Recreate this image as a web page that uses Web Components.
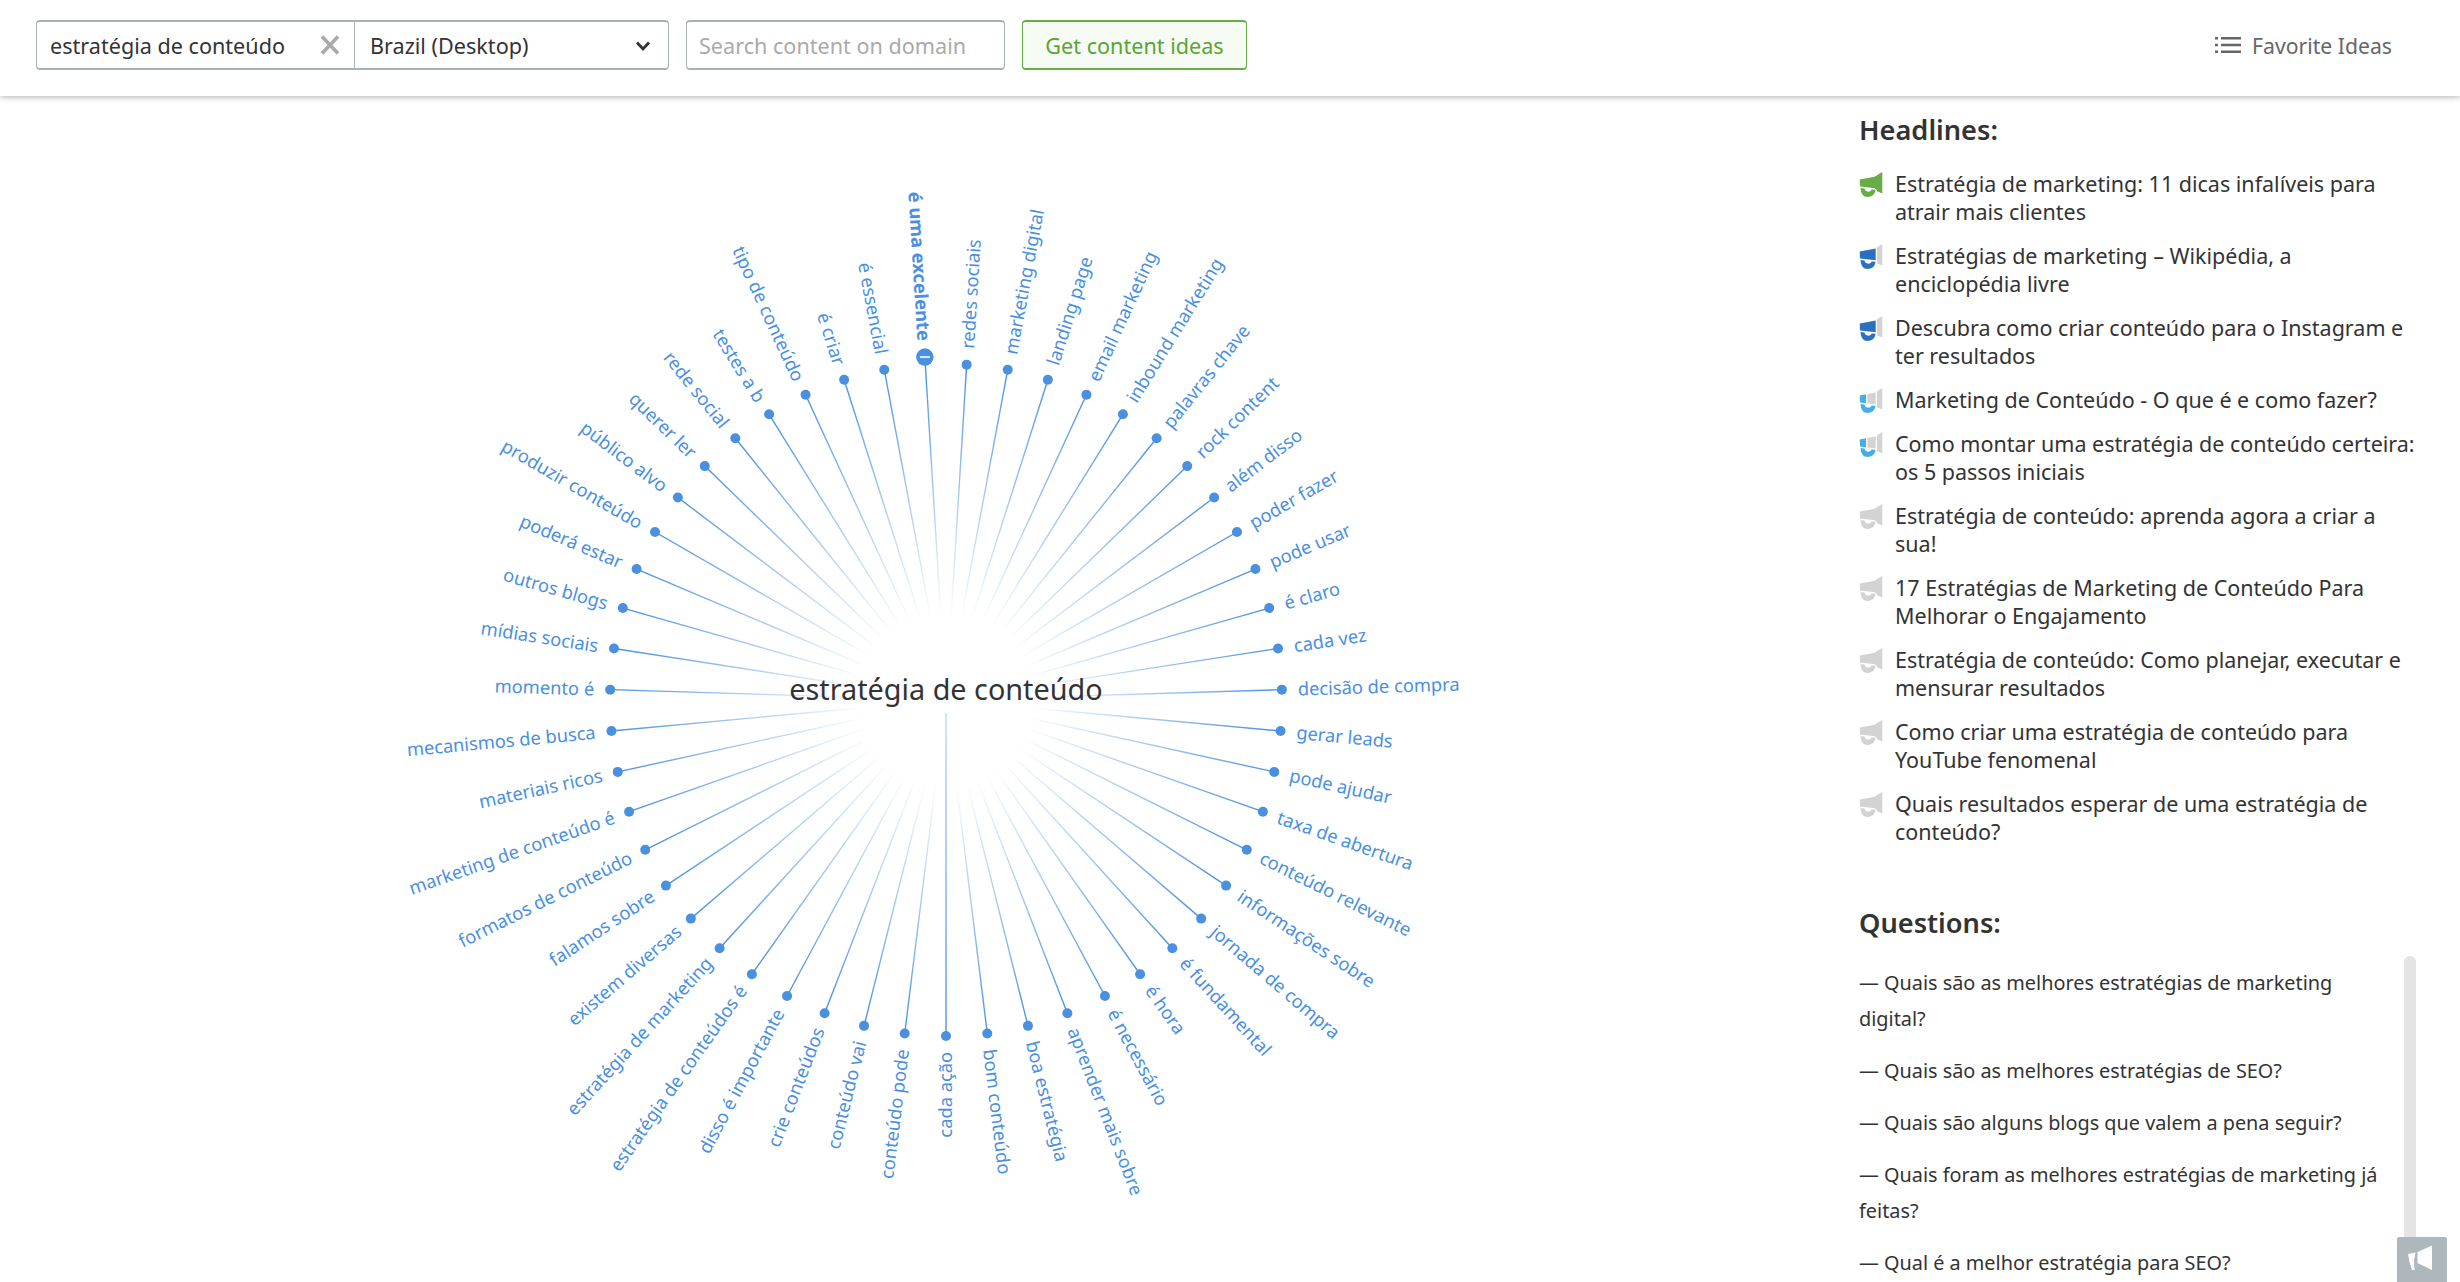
<!DOCTYPE html>
<html lang="pt">
<head>
<meta charset="utf-8">
<title>Topic ideas</title>
<style>
  html, body { margin: 0; height: 100%; overflow: hidden; background: #fff; }
  body { font-family: "Noto Sans", "Open Sans", sans-serif; color: #333; }
  .page { display: flex; height: calc(100vh - 96px); }
</style>
</head>
<body>
<top-bar></top-bar>
<div class="page">
  <idea-wheel keyword="estratégia de conteúdo"></idea-wheel>
  <ideas-panel>
    <panel-section heading="Headlines:">
      <headline-item level="high">Estratégia de marketing: 11 dicas infalíveis para<br>atrair mais clientes</headline-item>
      <headline-item level="medium">Estratégias de marketing – Wikipédia, a<br>enciclopédia livre</headline-item>
      <headline-item level="medium">Descubra como criar conteúdo para o Instagram e<br>ter resultados</headline-item>
      <headline-item level="low">Marketing de Conteúdo - O que é e como fazer?</headline-item>
      <headline-item level="low">Como montar uma estratégia de conteúdo certeira:<br>os 5 passos iniciais</headline-item>
      <headline-item>Estratégia de conteúdo: aprenda agora a criar a<br>sua!</headline-item>
      <headline-item>17 Estratégias de Marketing de Conteúdo Para<br>Melhorar o Engajamento</headline-item>
      <headline-item>Estratégia de conteúdo: Como planejar, executar e<br>mensurar resultados</headline-item>
      <headline-item>Como criar uma estratégia de conteúdo para<br>YouTube fenomenal</headline-item>
      <headline-item>Quais resultados esperar de uma estratégia de<br>conteúdo?</headline-item>
    </panel-section>
    <panel-section heading="Questions:" class="questions">
      <question-item>— Quais são as melhores estratégias de marketing<br>digital?</question-item>
      <question-item>— Quais são as melhores estratégias de SEO?</question-item>
      <question-item>— Quais são alguns blogs que valem a pena seguir?</question-item>
      <question-item>— Quais foram as melhores estratégias de marketing já<br>feitas?</question-item>
      <question-item>— Qual é a melhor estratégia para SEO?</question-item>
    </panel-section>
  </ideas-panel>
</div>
<feedback-tab></feedback-tab>

<script>
const MEGAPHONE = {
  bell: 'M18 3.2 23.3 0V21.6L18 19.2Z',
  join: 'M16 4.5 19 2.8V19.6L16 16.2Z',
  body: 'M.7 7.4 16.7 4.4V16.2L1 14.6Z',
  bodyLeft: 'M.7 7.4 7 6.2V15.2L1 14.6Z',
  bodyRight: 'M8.4 6 16.7 4.4V16.2L8.4 15.4Z',
  handle: 'M1.6 16 5.6 16.6C5.6 20.4 11.4 20.6 12.6 17.4L16.6 17.8C16 22.6 12.4 25 8.6 25 4.4 25 1.6 21.6 1.6 16Z'
};

class TopBar extends HTMLElement {
  constructor() {
    super();
    this.attachShadow({ mode: 'open' });
  }

  connectedCallback() {
    this.shadowRoot.innerHTML = `
      <style>
        :host {
          display: flex;
          position: relative;
          z-index: 2;
          box-sizing: border-box;
          height: 96px;
          padding: 20px 68px 0 36px;
          background: #fff;
          box-shadow: 0 1px 6px rgba(0, 0, 0, 0.32);
          font-size: 21.6px;
        }
        .box {
          box-sizing: border-box;
          height: 50px;
          border: solid #a9b1b3;
          border-width: 2px 1px;
          border-radius: 4px;
          display: flex;
          align-items: center;
        }
        .combo { width: 633px; }
        .keyword {
          width: 318px;
          box-sizing: border-box;
          height: 100%;
          padding: 0 13px 0 13px;
          border-right: 1px solid #a9b1b3;
          display: flex;
          align-items: center;
          justify-content: space-between;
        }
        .region {
          flex: 1;
          padding: 0 16px 0 15px;
          display: flex;
          align-items: center;
          justify-content: space-between;
        }
        .domain {
          width: 319px;
          margin-left: 17px;
          padding-left: 12px;
          color: #aaa;
        }
        .go {
          width: 225px;
          margin-left: 17px;
          justify-content: center;
          border-color: #67ad45;
          background: #f6fbf3;
          color: #5aa435;
        }
        .favorites {
          margin-left: auto;
          display: flex;
          align-items: center;
          gap: 11px;
          height: 50px;
          color: #666;
          font-size: 21.2px;
        }
      </style>
      <div class="box combo">
        <div class="keyword">
          <span>estratégia de conteúdo</span>
          <svg width="22" height="22" viewBox="0 0 22 22"><path d="M3 2.5 19 19.5M19 2.5 3 19.5" stroke="#aaa" stroke-width="3.6" fill="none"/></svg>
        </div>
        <div class="region">
          <span>Brazil (Desktop)</span>
          <svg width="18" height="18" viewBox="0 0 18 18"><path d="M3 6.5 9 13 15 6.5" stroke="#333" stroke-width="2.8" fill="none"/></svg>
        </div>
      </div>
      <div class="box domain">Search content on domain</div>
      <div class="box go">Get content ideas</div>
      <div class="favorites">
        <svg width="26" height="18" viewBox="0 0 26 18" fill="#666"><path d="M0 1h3v2.4H0zM6 1h20v2.4H6zM0 7.8h3v2.4H0zM6 7.8h20v2.4H6zM0 14.6h3V17H0zM6 14.6h20V17H6z"/></svg>
        <span>Favorite Ideas</span>
      </div>
    `;
  }
}

class IdeaWheel extends HTMLElement {
  constructor() {
    super();
    this.attachShadow({ mode: 'open' });
    this.labels = [
      'é uma excelente', 'redes sociais', 'marketing digital', 'landing page', 'email marketing',
      'inbound marketing', 'palavras chave', 'rock content', 'além disso', 'poder fazer', 'pode usar',
      'é claro', 'cada vez', 'decisão de compra', 'gerar leads', 'pode ajudar', 'taxa de abertura',
      'conteúdo relevante', 'informações sobre', 'jornada de compra', 'é fundamental', 'é hora',
      'é necessário', 'aprender mais sobre', 'boa estratégia', 'bom conteúdo', 'cada ação', 'conteúdo pode',
      'conteúdo vai', 'crie conteúdos', 'disso é importante', 'estratégia de conteúdos é',
      'estratégia de marketing', 'existem diversas', 'falamos sobre', 'formatos de conteúdo',
      'marketing de conteúdo é', 'materiais ricos', 'mecanismos de busca', 'momento é', 'mídias sociais',
      'outros blogs', 'poderá estar', 'produzir conteúdo', 'público alvo', 'querer ler', 'rede social',
      'testes a b', 'tipo de conteúdo', 'é criar', 'é essencial'
    ];
  }

  connectedCallback() {
    this.render();
  }

  render = () => {
    const cx = 946, cy = 604, r = 336;
    const step = 360 / this.labels.length;
    const parts = this.labels.map((label, i) => {
      const deg = -step / 2 + i * step;
      const rad = deg * Math.PI / 180;
      const selected = i === 0;
      const dotR = selected ? r + 7.6 : r;
      const x = cx + Math.sin(rad) * dotR;
      const y = cy - Math.cos(rad) * dotR;
      const gap = selected ? 24 : 16;
      const tx = cx + Math.sin(rad) * (r + gap);
      const ty = cy - Math.cos(rad) * (r + gap);
      const left = deg < 0 || deg >= 179;
      const rot = left ? deg + 90 : deg - 90;
      const stroke = i === 26 ? 'url(#straight)' : 'url(#fade)';
      const innerR = i === 26 ? 13 : 60;
      const ix = cx + Math.sin(rad) * innerR;
      const iy = cy - Math.cos(rad) * innerR;
      return `
        <line x1="${ix.toFixed(2)}" y1="${iy.toFixed(2)}" x2="${x.toFixed(2)}" y2="${y.toFixed(2)}" stroke="${stroke}" stroke-width="1.4"/>
        <circle cx="${x.toFixed(2)}" cy="${y.toFixed(2)}" r="${selected ? 8.7 : 5}" fill="#4a90df"/>
        ${selected ? `<rect x="${(x - 5).toFixed(2)}" y="${(y - 1).toFixed(2)}" width="10" height="2" fill="#dbe9f9"/>` : ''}
        <text class="${selected ? 'label on' : 'label'}" text-anchor="${left ? 'end' : 'start'}" dy="0.35em"
          transform="translate(${tx.toFixed(2)} ${ty.toFixed(2)}) rotate(${rot.toFixed(2)})">${label}</text>`;
    }).join('');

    this.shadowRoot.innerHTML = `
      <style>
        :host { display: block; width: 1859px; flex: none; overflow: hidden; }
        svg { display: block; }
        .label { font-size: 18.3px; fill: #4a90df; }
        .on { font-weight: 700; }
        .center { font-size: 28.8px; fill: #333; }
      </style>
      <svg width="1859" height="1186" viewBox="0 0 1859 1186">
        <defs>
          <radialGradient id="fade" gradientUnits="userSpaceOnUse" cx="${cx}" cy="${cy}" r="${r}">
            <stop offset="0.25" stop-color="#4a90df" stop-opacity="0"/>
            <stop offset="1" stop-color="#4a90df" stop-opacity="1"/>
          </radialGradient>
          <linearGradient id="straight" gradientUnits="userSpaceOnUse" x1="${cx}" y1="${cy + 13}" x2="${cx}" y2="${cy + r}">
            <stop offset="0" stop-color="#4a90df" stop-opacity="0.35"/>
            <stop offset="1" stop-color="#4a90df" stop-opacity="1"/>
          </linearGradient>
        </defs>
        ${parts}
        <text class="center" x="${cx}" y="604" text-anchor="middle">${this.getAttribute('keyword')}</text>
      </svg>
    `;
  }
}

class IdeasPanel extends HTMLElement {
  constructor() {
    super();
    this.attachShadow({ mode: 'open' });
  }

  connectedCallback() {
    this.shadowRoot.innerHTML = `
      <style>
        :host {
          display: flex;
          flex-direction: column;
          flex: 1;
          position: relative;
          box-sizing: border-box;
          padding: 16px 0 0 0;
          font-size: 21.5px;
        }
        .thumb {
          position: absolute;
          left: 545px;
          top: 860px;
          width: 12px;
          height: 340px;
          border-radius: 6px 6px 0 0;
          background: #e4e4e4;
        }
      </style>
      <slot></slot>
      <div class="thumb"></div>
    `;
  }
}

class PanelSection extends HTMLElement {
  constructor() {
    super();
    this.attachShadow({ mode: 'open' });
  }

  connectedCallback() {
    this.shadowRoot.innerHTML = `
      <style>
        :host { display: block; }
        :host(.questions) { margin-top: 59px; }
        :host(.questions) h2 { margin-bottom: 24px; }
        h2 {
          margin: 0 0 22px;
          font-size: 27.2px;
          line-height: 36px;
          font-weight: 600;
          color: #333;
        }
        .items { display: flex; flex-direction: column; gap: 16px; }
      </style>
      <h2>${this.getAttribute('heading')}</h2>
      <div class="items"><slot></slot></div>
    `;
  }
}

class HeadlineItem extends HTMLElement {
  constructor() {
    super();
    this.attachShadow({ mode: 'open' });
  }

  connectedCallback() {
    const level = this.getAttribute('level');
    const grey = '#d3d3d3';
    const tint = { high: '#67ad45', medium: '#2a70bf', low: '#45aee8' }[level] || grey;
    const body = level === 'low'
      ? `<path d="${MEGAPHONE.bodyLeft}" fill="${tint}"/><path d="${MEGAPHONE.bodyRight}" fill="${grey}"/>`
      : `<path d="${MEGAPHONE.body}" fill="${tint}"/>`;
    const bellColor = level === 'high' ? tint : grey;
    const join = level === 'high' || !level ? `<path d="${MEGAPHONE.join}" fill="${tint}"/>` : '';
    this.shadowRoot.innerHTML = `
      <style>
        :host { display: flex; gap: 12px; line-height: 28px; white-space: nowrap; color: #333; }
        svg { flex: none; margin-top: 2px; }
      </style>
      <svg width="24" height="25" viewBox="0 0 24 25">
        <path d="${MEGAPHONE.bell}" fill="${bellColor}"/>
        ${join}
        ${body}
        <path d="${MEGAPHONE.handle}" fill="${tint}"/>
      </svg>
      <div><slot></slot></div>
    `;
  }
}

class QuestionItem extends HTMLElement {
  constructor() {
    super();
    this.attachShadow({ mode: 'open' });
  }

  connectedCallback() {
    this.shadowRoot.innerHTML = `
      <style>
        :host { display: block; line-height: 36px; white-space: nowrap; color: #333; font-size: 19.85px; }
      </style>
      <slot></slot>
    `;
  }
}

class FeedbackTab extends HTMLElement {
  constructor() {
    super();
    this.attachShadow({ mode: 'open' });
  }

  connectedCallback() {
    this.shadowRoot.innerHTML = `
      <style>
        :host {
          position: fixed;
          right: 13px;
          bottom: 0;
          z-index: 3;
          display: block;
          width: 50px;
          height: 45px;
          border-radius: 2px 2px 0 0;
          background: #aeb7bc;
        }
        svg { display: block; }
      </style>
      <svg width="50" height="45" viewBox="0 0 50 45" fill="#fff">
        <path d="M20.5 15 35 8.5V33L20.5 26ZM11 17 18.5 15.5 17 24 17.6 33H15L12.5 25Z"/>
      </svg>
    `;
  }
}

customElements.define('top-bar', TopBar);
customElements.define('idea-wheel', IdeaWheel);
customElements.define('ideas-panel', IdeasPanel);
customElements.define('panel-section', PanelSection);
customElements.define('headline-item', HeadlineItem);
customElements.define('question-item', QuestionItem);
customElements.define('feedback-tab', FeedbackTab);
</script>
</body>
</html>
